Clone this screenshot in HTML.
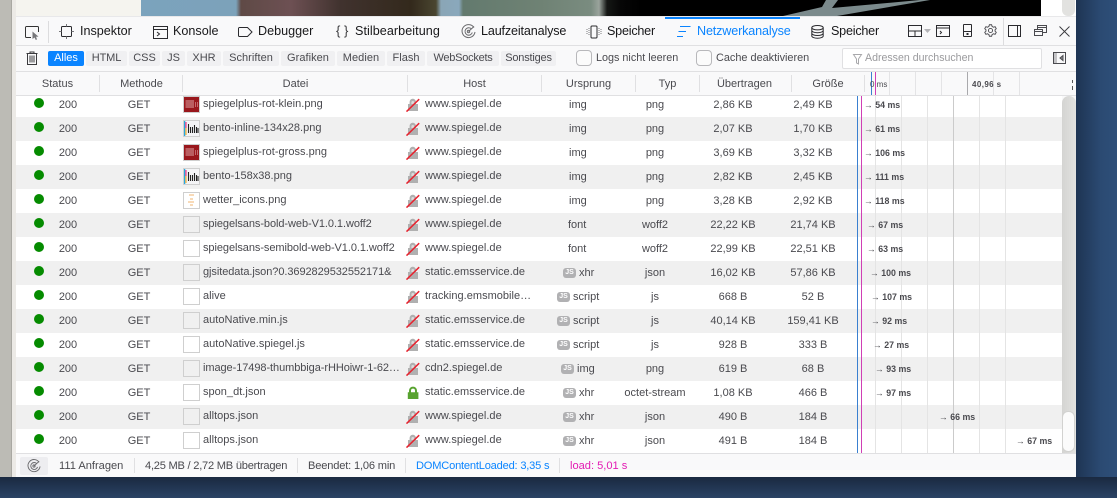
<!DOCTYPE html>
<html lang="de"><head><meta charset="utf-8"><title>Netzwerkanalyse</title>
<style>
html,body{margin:0;padding:0;width:1117px;height:498px;overflow:hidden;background:#24395a}
*{box-sizing:border-box}
body{position:relative;font-family:"Liberation Sans",sans-serif;font-size:11px;color:#4a4a4f}
.a{position:absolute}
.t{position:absolute;white-space:nowrap}
svg{position:absolute;overflow:visible}
#bgb{left:0;top:477px;width:1117px;height:21px;background:linear-gradient(#1a2940,#2a4365)}
#bgr{left:1076px;top:0;width:41px;height:498px;background:linear-gradient(90deg,#1e3453,#2b4a72 60%,#2e4f79)}
#gl{left:0;top:0;width:11px;height:477px;background:#bcbbb5}
#gl2{left:11px;top:0;width:5px;height:477px;background:#eceae6;border-left:1px solid #a9a8a2}
#page{left:16px;top:0;width:1060px;height:16px;overflow:hidden;background:#fff}
#win{left:16px;top:16px;width:1060px;height:461px;background:#f9f9fa}
.tb{font-size:12.6px;color:#18181a;top:24px;line-height:15px}
.ln{background:#e0e0e2}
.f{position:absolute;top:51px;height:15px;line-height:15px;background:#f0f0f2;border-radius:2px;text-align:center;font-size:11px;color:#4a4a4f}
.cb{position:absolute;top:50px;width:16px;height:16px;border:1px solid #b8b8bb;border-radius:4px;background:#fbfbfb}
.h{position:absolute;top:72px;height:23px;line-height:24px;font-size:11px;text-align:center;color:#4a4a4f}
.hs{position:absolute;top:75px;width:1px;height:17px;background:#e0e0e2}
#rows{left:16px;top:96px;width:1046px;height:357px;overflow:hidden;background:#fff}
.r{position:absolute;left:0;width:1046px;height:24px;line-height:24px;font-size:11px;color:#4a4a4f}
.r.g{background:#f0f0f0}
.r span{position:absolute;white-space:nowrap;top:0}
.d{width:10px;height:10px;border-radius:50%;background:#058b00;left:18px;top:5px!important}
.s{left:33px;width:38px;text-align:center}
.m{left:103px;width:40px;text-align:center}
.th{left:167px;top:3px!important;width:17px;height:17px;border:1px solid #cfcfcf;background:transparent}
.fn{left:187px;top:-1px!important;letter-spacing:.02px}
.fn.n{letter-spacing:-.07px}
.ho{left:409px;top:-1px!important;letter-spacing:.02px}
.ty{left:589px;width:100px;text-align:center}
.tr{left:677px;width:80px;text-align:center}
.gr{left:757px;width:80px;text-align:center}
.or{text-align:left}
.js{width:13px;height:10px;border-radius:3px;background:#b1b1b3;color:#fff;font-size:7px;font-weight:bold;line-height:10px;text-align:center;top:7px!important}
.w{font-weight:bold;font-size:8.8px;color:#4a4a4f;z-index:2}
.vl{position:absolute;width:1px}
.st{position:absolute;top:453px;height:24px;line-height:26px;font-size:11.1px;white-space:nowrap}
.ss{position:absolute;top:458px;width:1px;height:15px;background:#e0e0e2}
</style></head><body>
<svg width="0" height="0" style="position:absolute"><defs>
<symbol id="lk" viewBox="0 0 14 14"><path d="M3.6 6 V4.4 A3.2 3.2 0 0 1 10 3.6 V6 H12 V13 H2 V6 Z" fill="#b0b0b0"/><path d="M5.4 6 V4.4 A1.4 1.4 0 0 1 8.2 4.4 V6" fill="#fff" opacity=".55"/><path d="M0.5 13.6 L13.2 1.2" stroke="#e8232f" stroke-width="1.5"/></symbol>
<symbol id="ok" viewBox="0 0 14 14"><path d="M3 6.2 V4.6 A4 4 0 0 1 11 4.6 V6.2 H12.4 V13 H1.8 V6.2 Z M5 6.2 H9 V4.6 A2 2 0 0 0 5 4.6 Z" fill="#58a330" fill-rule="evenodd"/></symbol>
<symbol id="pl" viewBox="0 0 17 17"><rect x="0" y="0" width="17" height="17" fill="#fff"/><rect x="1" y="1" width="15" height="15" fill="#99171c"/><path d="M2.500 5 H11 M2.500 7 H11 M2.500 9 H11 M2.500 11 H11" stroke="#dca6a6" stroke-width="1"/><path d="M12.500 6 V11 M14.500 6 V11" stroke="#c46a6e"/></symbol>
<symbol id="be" viewBox="0 0 17 17"><rect x="0" y="1" width="17" height="15" fill="#f4f4f6"/><rect x="1" y="1" width="1.300" height="15" fill="#26a9e0"/><rect x="2.300" y="2" width="1.300" height="6" fill="#ec3f8b"/><rect x="2.300" y="8" width="1.300" height="7" fill="#f6b13c"/><path d="M5.500 4 V13 M7.500 7 V13 M9.500 7 V13 M11.500 5 V13 M13.500 7 V13 M15 8 V13" stroke="#222" stroke-width="1.100"/></symbol>
<symbol id="we" viewBox="0 0 17 17"><path d="M6 3 H11 M7 7 H10 M5 10 H11 M7 13 H10" stroke="#f3c48d" stroke-width="1.2"/></symbol>
</defs></svg>

<div class="a" id="bgr"></div><div class="a" id="bgb"></div>
<div class="a" id="gl"></div><div class="a" id="gl2"></div>

<div class="a" id="page">
 <div class="a" style="left:0;top:0;width:125px;height:16px;background:#f5f4ef"></div>
 <div class="a" style="left:125px;top:0;width:900px;height:16px;background:linear-gradient(90deg,#7ba3bd 0,#7ca2ba 95px,#5f4a46 100px,#6d5053 150px,#40322e 200px,#33291c 270px,#4a4630 295px,#8aa6b6 300px,#8aa8bc 318px,#637a6e 322px,#6f8274 400px,#7a8c80 450px,#9aa39c 458px,#151715 466px,#060606 480px,#000 500px)"></div>
 <svg style="left:0;top:0" width="1060" height="16"><path d="M767 16 L806 7 L810 0 L822 0 L816 8 L904 0 L914 0 L821 16 Z" fill="#7b8a8c"/></svg>
 <div class="a" style="left:1025px;top:0;width:35px;height:16px;background:#fff"></div>
 <div class="a" style="left:1046px;top:-4px;width:13px;height:20px;background:#e2e2e0;border-radius:0 0 6px 6px"></div>
</div>

<div class="a" id="win"></div>
<div class="a" style="left:16px;top:16px;width:1060px;height:1px;background:#e8e8ea"></div>
<div class="a ln" style="left:16px;top:45px;width:1060px;height:1px"></div>
<div class="a ln" style="left:16px;top:71px;width:1060px;height:1px"></div>
<div class="a ln" style="left:16px;top:95px;width:1060px;height:1px"></div>
<div class="a" style="left:665px;top:17px;width:135px;height:2px;background:#0a84ff"></div>

<!-- toolbar icons -->
<svg style="left:25px;top:26px" width="16" height="14" viewBox="0 0 16 14"><path d="M6 11.500 H1.500 A1 1 0 0 1 .5 10.500 V1.500 A1 1 0 0 1 1.500 .5 H12.500 A1 1 0 0 1 13.500 1.500 V6" fill="none" stroke="#333"/><path d="M7.500 5.500 L7.500 13 L9.500 11.500 L10.800 14 L12 13.400 L11 10.800 L13.500 10.600 Z" fill="#77777a"/></svg>
<div class="a" style="left:48px;top:21px;width:1px;height:22px;background:#dcdcde"></div>
<svg style="left:59px;top:24px" width="15" height="15" viewBox="0 0 15 15" fill="none"><rect x="2.500" y="2.500" width="10" height="10" rx="1" stroke="#2a2a2e"/><path d="M0 7.500 H2.500 M12.500 7.500 H15 M7.500 0 V2.500 M7.500 12.500 V15" stroke="#77777a"/></svg>
<span class="t tb" style="left:80px">Inspektor</span>
<svg style="left:153px;top:26px" width="15" height="13" viewBox="0 0 15 13" fill="none" stroke="#2a2a2e"><rect x=".5" y=".5" width="14" height="12"/><path d="M.5 3.500 H14.500"/><path d="M4 6 L6.500 8 L4 10"/></svg>
<span class="t tb" style="left:173px">Konsole</span>
<svg style="left:238px;top:26px" width="15" height="12" viewBox="0 0 15 12" fill="none" stroke="#2a2a2e"><path d="M1.500 1.500 H9.500 L14 6 L9.500 10.500 H1.500 A1 1 0 0 1 .5 9.500 V2.500 A1 1 0 0 1 1.500 1.500 Z"/></svg>
<span class="t tb" style="left:258px">Debugger</span>
<span class="t tb" style="left:336px;top:23px;font-size:13px;color:#3a3a3d">{</span>
<span class="t tb" style="left:344px;top:23px;font-size:13px;color:#3a3a3d">}</span>
<span class="t tb" style="left:355px;letter-spacing:.06px">Stilbearbeitung</span>
<svg style="left:461px;top:24px" width="15" height="15" viewBox="0 0 15 15" fill="none" stroke="#6a6a6d"><path d="M13 3.500 A6.500 6.500 0 1 0 14 8"/><path d="M10.500 5 A3.700 3.700 0 1 0 11.300 8.500"/><circle cx="7.500" cy="7.500" r="1.200"/><path d="M7.500 7.500 L13 2.500"/></svg>
<span class="t tb" style="left:481px;letter-spacing:-.15px">Laufzeitanalyse</span>
<svg style="left:586px;top:25px" width="16" height="14" viewBox="0 0 16 14" fill="none" stroke="#2a2a2e"><rect x="5" y="1" width="6" height="12" rx="1"/><path d="M3 3 V11 M1 4 V10 M13 3 V11 M15 4 V10" stroke="#7a7a7d" stroke-dasharray="1 1"/></svg>
<span class="t tb" style="left:607px;letter-spacing:-.22px">Speicher</span>
<svg style="left:677px;top:26px" width="14" height="12" viewBox="0 0 14 12" fill="none" stroke="#0a84ff"><path d="M3 .5 H13.500 M1.500 5.500 H9 M0 10.500 H6"/></svg>
<span class="t tb" style="left:697px;color:#0a84ff;letter-spacing:-.15px">Netzwerkanalyse</span>
<svg style="left:811px;top:25px" width="13" height="14" viewBox="0 0 13 14" fill="none" stroke="#2a2a2e"><ellipse cx="6.500" cy="2.700" rx="5.700" ry="2.200"/><path d="M.8 2.700 V11 C.8 12.200 3.300 13.200 6.500 13.200 S12.200 12.200 12.200 11 V2.700 M.8 5.500 C.8 6.700 3.300 7.700 6.500 7.700 S12.200 6.700 12.200 5.500 M.8 8.300 C.8 9.500 3.300 10.500 6.500 10.500 S12.200 9.500 12.200 8.300"/></svg>
<span class="t tb" style="left:831px;letter-spacing:-.22px">Speicher</span>

<svg style="left:908px;top:25px" width="14" height="12" viewBox="0 0 14 12" fill="none" stroke="#2a2a2e"><rect x=".5" y=".5" width="13" height="11"/><path d="M.5 6 H13.500 M7 6 V11.500"/></svg>
<svg style="left:924px;top:29px" width="7" height="4" viewBox="0 0 7 4"><path d="M0 0 H7 L3.500 4 Z" fill="#b4b4b7"/></svg>
<svg style="left:936px;top:25px" width="14" height="12" viewBox="0 0 14 12" fill="none" stroke="#2a2a2e"><rect x=".5" y=".5" width="13" height="11"/><path d="M.5 3 H13.500"/><path d="M4 6 L5.500 7.500 L4 9"/></svg>
<svg style="left:963px;top:24px" width="9" height="13" viewBox="0 0 9 13" fill="none" stroke="#2a2a2e"><rect x=".5" y=".5" width="8" height="12" rx=".5"/><path d="M.5 7.500 H8.500"/><rect x="3.500" y="9" width="2" height="2" fill="#2a2a2e" stroke="none"/></svg>
<svg style="left:984px;top:24px" width="13" height="13" viewBox="0 0 14 14" fill="none" stroke="#4a4a4f"><path d="M5.800 .8 H8.200 L8.700 2.600 L10.300 3.500 L12 2.900 L13.200 5 L11.900 6.300 V7.700 L13.200 9 L12 11.100 L10.300 10.500 L8.700 11.400 L8.200 13.200 H5.800 L5.300 11.400 L3.700 10.500 L2 11.100 L.8 9 L2.100 7.700 V6.300 L.8 5 L2 2.900 L3.700 3.500 L5.300 2.600 Z"/><circle cx="7" cy="7" r="2.200"/></svg>
<div class="a" style="left:1003px;top:18px;width:1px;height:27px;background:#dcdcde"></div>
<svg style="left:1008px;top:25px" width="13" height="12" viewBox="0 0 13 12" fill="none" stroke="#2a2a2e"><rect x=".5" y=".5" width="12" height="11"/><path d="M9.500 .5 V11.500"/></svg>
<svg style="left:1034px;top:25px" width="13" height="12" viewBox="0 0 13 12" fill="none" stroke="#4a4a4f"><rect x="3.500" y=".5" width="9" height="7" fill="#f9f9fa"/><path d="M3.500 2.500 H12.500"/><rect x=".5" y="4.500" width="8" height="6" fill="#f9f9fa"/><path d="M.5 6.500 H8.500"/></svg>
<svg style="left:1059px;top:26px" width="11" height="11" viewBox="0 0 11 11" stroke="#3a3a3d" stroke-width=".9"><path d="M.5 .5 L10.500 10.500 M10.500 .5 L.5 10.500"/></svg>

<!-- filter bar -->
<svg style="left:26px;top:51px" width="12" height="14" viewBox="0 0 12 14" fill="none" stroke="#3a3a3d"><path d="M.5 2.500 H11.500 M4 2.500 V1 H8 V2.500"/><path d="M1.500 2.500 V13.500 H10.500 V2.500"/><path d="M4 4.500 V11.500 M6 4.500 V11.500 M8 4.500 V11.500"/></svg>
<div class="f" style="left:48px;width:36px;background:#0a84ff;color:#fff">Alles</div>
<div class="f" style="left:86px;width:41px;letter-spacing:-.1px">HTML</div>
<div class="f" style="left:129px;width:31px">CSS</div>
<div class="f" style="left:162px;width:23px">JS</div>
<div class="f" style="left:187px;width:34px">XHR</div>
<div class="f" style="left:223px;width:56px;letter-spacing:.05px">Schriften</div>
<div class="f" style="left:281px;width:54px;letter-spacing:.05px">Grafiken</div>
<div class="f" style="left:337px;width:48px;letter-spacing:.05px">Medien</div>
<div class="f" style="left:387px;width:38px">Flash</div>
<div class="f" style="left:427px;width:72px;letter-spacing:-.25px">WebSockets</div>
<div class="f" style="left:501px;width:55px;letter-spacing:-.2px">Sonstiges</div>
<div class="cb" style="left:576px"></div>
<span class="t" style="left:596px;top:51px;line-height:15px;font-size:10.8px">Logs nicht leeren</span>
<div class="cb" style="left:696px"></div>
<span class="t" style="left:716px;top:51px;line-height:15px;font-size:10.9px">Cache deaktivieren</span>
<div class="a" style="left:842px;top:48px;width:200px;height:21px;background:#fff;border:1px solid #e0e0e2;border-radius:2px"></div>
<svg style="left:853px;top:54px" width="9" height="11" viewBox="0 0 9 11" fill="none" stroke="#a8a8ab"><path d="M.5 .5 H8.500 L5.500 5 V10 L3.500 9 V5 Z"/></svg>
<span class="t" style="left:865px;top:50px;line-height:16px;font-size:10.6px;color:#9a9a9d">Adressen durchsuchen</span>
<svg style="left:1053px;top:52px" width="13" height="12" viewBox="0 0 13 12" fill="none" stroke="#4a4a4f"><rect x=".5" y=".5" width="12" height="11"/><rect x="1" y="1" width="3" height="10" fill="#c4c4c7" stroke="none"/><path d="M10 3.500 L7 6 L10 8.500 Z" fill="#8a8a8d"/></svg>

<!-- table header -->
<div class="h" style="left:16px;width:83px">Status</div>
<div class="h" style="left:100px;width:83px">Methode</div>
<div class="h" style="left:183px;width:225px">Datei</div>
<div class="h" style="left:408px;width:133px">Host</div>
<div class="h" style="left:542px;width:93px">Ursprung</div>
<div class="h" style="left:636px;width:63px">Typ</div>
<div class="h" style="left:699px;width:91px">Übertragen</div>
<div class="h" style="left:792px;width:72px">Größe</div>
<div class="hs" style="left:99px"></div><div class="hs" style="left:182px"></div><div class="hs" style="left:407px"></div><div class="hs" style="left:541px"></div><div class="hs" style="left:635px"></div><div class="hs" style="left:699px"></div><div class="hs" style="left:791px"></div><div class="hs" style="left:864px"></div>
<div class="a" style="left:889px;top:72px;width:1px;height:23px;background:#e4e4e6"></div>
<div class="a" style="left:915px;top:72px;width:1px;height:23px;background:#e4e4e6"></div>
<div class="a" style="left:941px;top:72px;width:1px;height:23px;background:#e4e4e6"></div>
<div class="a" style="left:967px;top:72px;width:1px;height:23px;background:#a9a9ac"></div>
<div class="a" style="left:993px;top:72px;width:1px;height:23px;background:#e4e4e6"></div>
<div class="a" style="left:1019px;top:72px;width:1px;height:23px;background:#e4e4e6"></div>
<div class="a" style="left:1072px;top:80px;width:1px;height:3px;background:#555"></div>
<div class="a" style="left:1072px;top:86px;width:1px;height:4px;background:#555"></div>
<span class="t w" style="left:870px;top:79px;line-height:11px;font-weight:normal;font-size:8px">0 ms</span>
<span class="t w" style="left:972px;top:79px;line-height:11px;font-size:8px;letter-spacing:.4px">40,96 s</span>
<div class="a" style="left:871px;top:72px;width:1px;height:23px;background:#3a80d0"></div>
<div class="a" style="left:875px;top:72px;width:1px;height:23px;background:#d03fb5"></div>

<!-- rows -->
<div class="a" id="rows">
<div class="r" style="top:-3px"><span class="d"></span><span class="s">200</span><span class="m">GET</span><svg style="left:167px;top:3px" width="17" height="17"><use href="#pl"/></svg><span class="th"></span><span class="fn">spiegelplus-rot-klein.png</span><svg style="left:390px;top:5px" width="14" height="14"><use href="#lk"/></svg><span class="ho">www.spiegel.de</span><span class="or" style="left:553px">img</span><span class="ty">png</span><span class="tr">2,86 KB</span><span class="gr">2,49 KB</span><span class="w" style="left:848px">→ 54 ms</span></div>
<div class="r g" style="top:21px"><span class="d"></span><span class="s">200</span><span class="m">GET</span><svg style="left:167px;top:3px" width="17" height="17"><use href="#be"/></svg><span class="th"></span><span class="fn">bento-inline-134x28.png</span><svg style="left:390px;top:5px" width="14" height="14"><use href="#lk"/></svg><span class="ho">www.spiegel.de</span><span class="or" style="left:553px">img</span><span class="ty">png</span><span class="tr">2,07 KB</span><span class="gr">1,70 KB</span><span class="w" style="left:848px">→ 61 ms</span></div>
<div class="r" style="top:45px"><span class="d"></span><span class="s">200</span><span class="m">GET</span><svg style="left:167px;top:3px" width="17" height="17"><use href="#pl"/></svg><span class="th"></span><span class="fn">spiegelplus-rot-gross.png</span><svg style="left:390px;top:5px" width="14" height="14"><use href="#lk"/></svg><span class="ho">www.spiegel.de</span><span class="or" style="left:553px">img</span><span class="ty">png</span><span class="tr">3,69 KB</span><span class="gr">3,32 KB</span><span class="w" style="left:848px">→ 106 ms</span></div>
<div class="r g" style="top:69px"><span class="d"></span><span class="s">200</span><span class="m">GET</span><svg style="left:167px;top:3px" width="17" height="17"><use href="#be"/></svg><span class="th"></span><span class="fn">bento-158x38.png</span><svg style="left:390px;top:5px" width="14" height="14"><use href="#lk"/></svg><span class="ho">www.spiegel.de</span><span class="or" style="left:553px">img</span><span class="ty">png</span><span class="tr">2,82 KB</span><span class="gr">2,45 KB</span><span class="w" style="left:848px">→ 111 ms</span></div>
<div class="r" style="top:93px"><span class="d"></span><span class="s">200</span><span class="m">GET</span><svg style="left:167px;top:3px" width="17" height="17"><use href="#we"/></svg><span class="th"></span><span class="fn">wetter_icons.png</span><svg style="left:390px;top:5px" width="14" height="14"><use href="#lk"/></svg><span class="ho">www.spiegel.de</span><span class="or" style="left:553px">img</span><span class="ty">png</span><span class="tr">3,28 KB</span><span class="gr">2,92 KB</span><span class="w" style="left:848px">→ 118 ms</span></div>
<div class="r g" style="top:117px"><span class="d"></span><span class="s">200</span><span class="m">GET</span><span class="th"></span><span class="fn n">spiegelsans-bold-web-V1.0.1.woff2</span><svg style="left:390px;top:5px" width="14" height="14"><use href="#lk"/></svg><span class="ho">www.spiegel.de</span><span class="or" style="left:552px">font</span><span class="ty">woff2</span><span class="tr">22,22 KB</span><span class="gr">21,74 KB</span><span class="w" style="left:851px">→ 67 ms</span></div>
<div class="r" style="top:141px"><span class="d"></span><span class="s">200</span><span class="m">GET</span><span class="th"></span><span class="fn n">spiegelsans-semibold-web-V1.0.1.woff2</span><svg style="left:390px;top:5px" width="14" height="14"><use href="#lk"/></svg><span class="ho">www.spiegel.de</span><span class="or" style="left:552px">font</span><span class="ty">woff2</span><span class="tr">22,99 KB</span><span class="gr">22,51 KB</span><span class="w" style="left:851px">→ 63 ms</span></div>
<div class="r g" style="top:165px"><span class="d"></span><span class="s">200</span><span class="m">GET</span><span class="th"></span><span class="fn n">gjsitedata.json?0.3692829532552171&amp;</span><svg style="left:390px;top:5px" width="14" height="14"><use href="#lk"/></svg><span class="ho">static.emsservice.de</span><span class="js" style="left:547px">JS</span><span class="or" style="left:563px">xhr</span><span class="ty">json</span><span class="tr">16,02 KB</span><span class="gr">57,86 KB</span><span class="w" style="left:854px">→ 100 ms</span></div>
<div class="r" style="top:189px"><span class="d"></span><span class="s">200</span><span class="m">GET</span><span class="th"></span><span class="fn">alive</span><svg style="left:390px;top:5px" width="14" height="14"><use href="#lk"/></svg><span class="ho">tracking.emsmobile…</span><span class="js" style="left:541px">JS</span><span class="or" style="left:557px">script</span><span class="ty">js</span><span class="tr">668 B</span><span class="gr">52 B</span><span class="w" style="left:855px">→ 107 ms</span></div>
<div class="r g" style="top:213px"><span class="d"></span><span class="s">200</span><span class="m">GET</span><span class="th"></span><span class="fn">autoNative.min.js</span><svg style="left:390px;top:5px" width="14" height="14"><use href="#lk"/></svg><span class="ho">static.emsservice.de</span><span class="js" style="left:541px">JS</span><span class="or" style="left:557px">script</span><span class="ty">js</span><span class="tr">40,14 KB</span><span class="gr">159,41 KB</span><span class="w" style="left:855px">→ 92 ms</span></div>
<div class="r" style="top:237px"><span class="d"></span><span class="s">200</span><span class="m">GET</span><span class="th"></span><span class="fn">autoNative.spiegel.js</span><svg style="left:390px;top:5px" width="14" height="14"><use href="#lk"/></svg><span class="ho">static.emsservice.de</span><span class="js" style="left:541px">JS</span><span class="or" style="left:557px">script</span><span class="ty">js</span><span class="tr">928 B</span><span class="gr">333 B</span><span class="w" style="left:857px">→ 27 ms</span></div>
<div class="r g" style="top:261px"><span class="d"></span><span class="s">200</span><span class="m">GET</span><span class="th"></span><span class="fn n">image-17498-thumbbiga-rHHoiwr-1-62…</span><svg style="left:390px;top:5px" width="14" height="14"><use href="#lk"/></svg><span class="ho">cdn2.spiegel.de</span><span class="js" style="left:545px">JS</span><span class="or" style="left:561px">img</span><span class="ty">png</span><span class="tr">619 B</span><span class="gr">68 B</span><span class="w" style="left:859px">→ 93 ms</span></div>
<div class="r" style="top:285px"><span class="d"></span><span class="s">200</span><span class="m">GET</span><span class="th"></span><span class="fn">spon_dt.json</span><svg style="left:390px;top:5px" width="14" height="14"><use href="#ok"/></svg><span class="ho">static.emsservice.de</span><span class="js" style="left:547px">JS</span><span class="or" style="left:563px">xhr</span><span class="ty">octet-stream</span><span class="tr">1,08 KB</span><span class="gr">466 B</span><span class="w" style="left:859px">→ 97 ms</span></div>
<div class="r g" style="top:309px"><span class="d"></span><span class="s">200</span><span class="m">GET</span><span class="th"></span><span class="fn">alltops.json</span><svg style="left:390px;top:5px" width="14" height="14"><use href="#lk"/></svg><span class="ho">www.spiegel.de</span><span class="js" style="left:547px">JS</span><span class="or" style="left:563px">xhr</span><span class="ty">json</span><span class="tr">490 B</span><span class="gr">184 B</span><span class="w" style="left:923px">→ 66 ms</span></div>
<div class="r" style="top:333px"><span class="d"></span><span class="s">200</span><span class="m">GET</span><span class="th"></span><span class="fn">alltops.json</span><svg style="left:390px;top:5px" width="14" height="14"><use href="#lk"/></svg><span class="ho">www.spiegel.de</span><span class="js" style="left:547px">JS</span><span class="or" style="left:563px">xhr</span><span class="ty">json</span><span class="tr">491 B</span><span class="gr">184 B</span><span class="w" style="left:1000px">→ 67 ms</span></div>
<div class="vl" style="left:841px;top:0;height:357px;background:#3a80d0"></div>
<div class="vl" style="left:845px;top:0;height:357px;background:#d03fb5"></div>
<div class="vl" style="left:859px;top:0;height:357px;background:#e4e4e4"></div>
<div class="vl" style="left:885px;top:0;height:357px;background:#e4e4e4"></div>
<div class="vl" style="left:911px;top:0;height:357px;background:#e4e4e4"></div>
<div class="vl" style="left:937px;top:0;height:357px;background:#cbcbcb"></div>
<div class="vl" style="left:963px;top:0;height:357px;background:#e4e4e4"></div>
<div class="vl" style="left:989px;top:0;height:357px;background:#e4e4e4"></div>
</div>

<!-- scrollbar -->
<div class="a" style="left:1062px;top:96px;width:14px;height:357px;background:linear-gradient(90deg,#d4d4d2,#e2e2e0);border-radius:7px 7px 0 0"></div>
<div class="a" style="left:1062px;top:411px;width:13px;height:41px;background:#fbfbfb;border:1px solid #d2d2d0;border-radius:6px"></div>

<!-- status bar -->
<div class="a ln" style="left:16px;top:453px;width:1060px;height:1px"></div>
<div class="a" style="left:20px;top:457px;width:28px;height:18px;background:#ededf0;border-radius:2px"></div>
<svg style="left:27px;top:459px" width="14" height="14" viewBox="0 0 15 15" fill="none" stroke="#6a6a6d"><path d="M13 3.500 A6.500 6.500 0 1 0 14 8"/><path d="M10.500 5 A3.700 3.700 0 1 0 11.300 8.500"/><circle cx="7.500" cy="7.500" r="1.200"/><path d="M7.500 7.500 L13 2.500"/></svg>
<span class="st" style="left:59px">111 Anfragen</span><div class="ss" style="left:134px"></div>
<span class="st" style="left:145px;letter-spacing:-.23px">4,25 MB / 2,72 MB übertragen</span><div class="ss" style="left:297px"></div>
<span class="st" style="left:308px;letter-spacing:-.17px">Beendet: 1,06 min</span><div class="ss" style="left:405px"></div>
<span class="st" style="left:416px;color:#0a84ff;letter-spacing:-.2px">DOMContentLoaded: 3,35 s</span><div class="ss" style="left:559px"></div>
<span class="st" style="left:570px;color:#e31bb3">load: 5,01 s</span>
</body></html>
